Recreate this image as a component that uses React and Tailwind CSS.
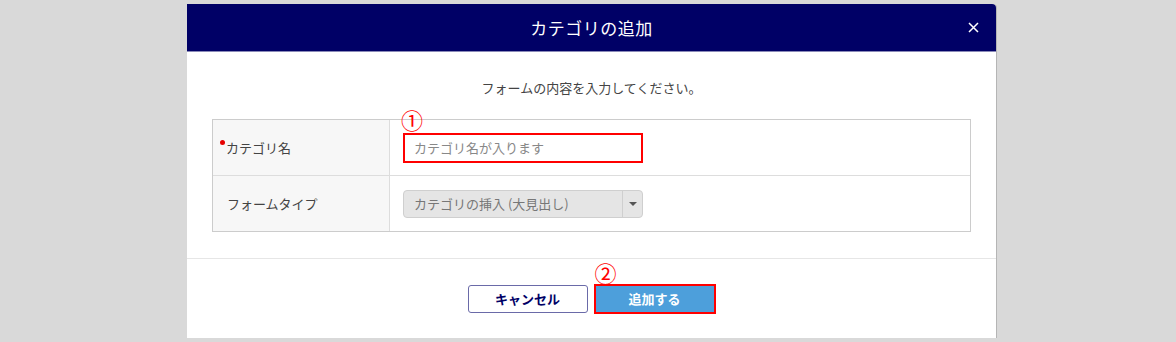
const font = { fontFamily: '"Noto Sans CJK JP", "Noto Sans", sans-serif' };

const App = () => {
  return (
    <div className="w-[1176px] h-[342px] bg-[#d9d9d9] pt-[4px] pl-[187px] overflow-hidden" style={font}>
      <div className="w-[810px] h-[334px] bg-white rounded-tr-[4px] border-r border-[#b5b5b5] flex flex-col">
        <div className="h-[48px] bg-[#000066] rounded-tr-[4px] border-b border-[#8a8ab8] flex items-center justify-center relative">
          <h1 className="text-white text-[17px] tracking-[0.5px]">カテゴリの追加</h1>
          <svg className="absolute right-[17px] top-[18px]" width="11" height="11" viewBox="0 0 11 11">
            <path d="M1 1 L10 10 M10 1 L1 10" stroke="white" strokeWidth="1.5" fill="none" />
          </svg>
        </div>
        <div className="h-[207px] border-b border-[#e6e6e6] px-[25px] pt-[26px]">
          <p className="text-center text-[13px] text-[#444] leading-[20px] mb-[21px]">フォームの内容を入力してください。</p>
          <div className="border border-[#cccccc] text-[13px] text-[#444]">
            <div className="flex h-[56px] border-b border-[#dddddd]">
              <div className="w-[177px] bg-[#f7f7f7] border-r border-[#dddddd] flex items-center pl-[7px]">
                <span className="w-[5px] h-[5px] rounded-full bg-[#e60000] self-start mt-[20px] mr-[1px]"></span>
                <span>カテゴリ名</span>
              </div>
              <div className="flex-1 flex items-center pl-[13px] relative">
                <span className="absolute left-[11px] top-[-12px] text-[#ff0000] text-[22px] leading-none">①</span>
                <div className="w-[240px] h-[30px] border-2 border-[#ff0000] flex items-center pl-[9px]">
                  <input className="w-full outline-none text-[13px] placeholder-[#888]" placeholder="カテゴリ名が入ります" style={font} />
                </div>
              </div>
            </div>
            <div className="flex h-[55px]">
              <div className="w-[177px] bg-[#f7f7f7] border-r border-[#dddddd] flex items-center pl-[14px]">
                フォームタイプ
              </div>
              <div className="flex-1 flex items-center pl-[13px]">
                <div className="w-[240px] h-[28px] bg-[#e5e5e5] border border-[#cfcfcf] rounded-[4px] flex items-center text-[#777]">
                  <span className="flex-1 pl-[10px]">カテゴリの挿入 (大見出し)</span>
                  <span className="w-[20px] h-full border-l border-[#cfcfcf] flex items-center justify-center">
                    <span className="w-0 h-0 border-l-[4px] border-r-[4px] border-t-[4px] border-l-transparent border-r-transparent border-t-[#555]"></span>
                  </span>
                </div>
              </div>
            </div>
          </div>
        </div>
        <div className="flex-1 flex items-start justify-center pt-[26px] gap-[6px]">
          <button className="w-[120px] h-[28px] border border-[#6a6aa8] rounded-[3px] text-[#000066] text-[13px] font-bold bg-white">キャンセル</button>
          <div className="relative">
            <span className="absolute left-[1px] top-[-24px] text-[#ff0000] text-[22px] leading-none">②</span>
            <button className="w-[122px] h-[30px] mt-[-1px] bg-[#4d9fdb] border-2 border-[#ff0000] text-white text-[13px] font-bold">追加する</button>
          </div>
        </div>
      </div>
    </div>
  );
};

export default App;
